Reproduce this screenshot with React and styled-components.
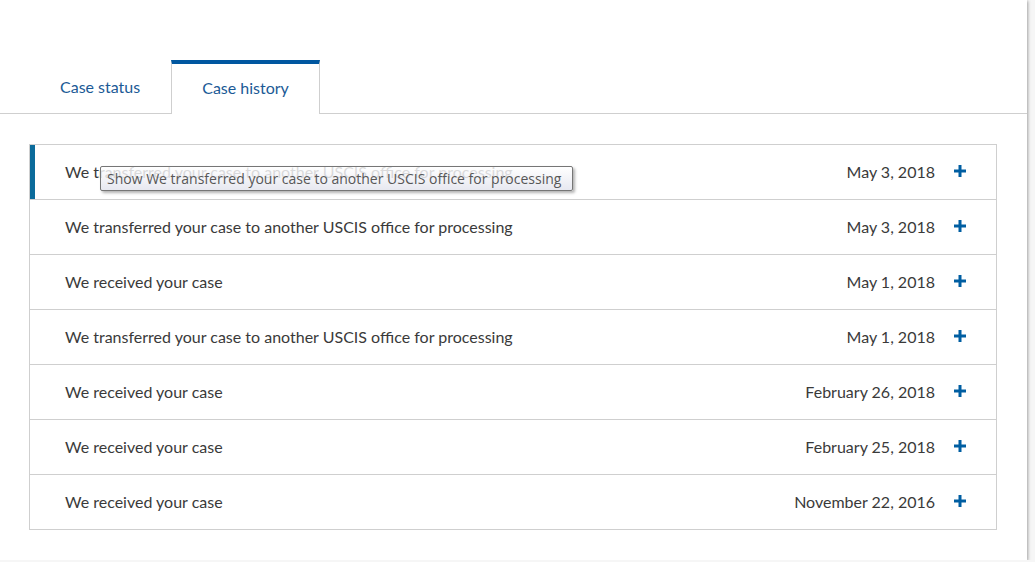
import React from "react";
import styled, { createGlobalStyle } from "styled-components";

const Global = createGlobalStyle`
  html, body { margin: 0; padding: 0; background: #f6f6f6; }
  body { font-family: "Lato", "Liberation Sans", sans-serif; }
`;

const history = [
  { text: "We transferred your case to another USCIS office for processing", date: "May 3, 2018", active: true },
  { text: "We transferred your case to another USCIS office for processing", date: "May 3, 2018" },
  { text: "We received your case", date: "May 1, 2018" },
  { text: "We transferred your case to another USCIS office for processing", date: "May 1, 2018" },
  { text: "We received your case", date: "February 26, 2018" },
  { text: "We received your case", date: "February 25, 2018" },
  { text: "We received your case", date: "November 22, 2016" },
];

export default function App() {
  return (
    <>
      <Global />
      <Card>
        <Tabs>
          <Tab>Case status</Tab>
          <Tab $active>Case history</Tab>
        </Tabs>
        <Body>
          <List>
            {history.map((h, i) => (
              <Row key={i} $active={h.active}>
                <Text>{h.text}</Text>
                <DateText>{h.date}</DateText>
                <Plus viewBox="0 0 12 12">
                  <rect x="4.5" y="0" width="3" height="12" />
                  <rect x="0" y="4.5" width="12" height="3" />
                </Plus>
              </Row>
            ))}
          </List>
          <Tooltip>Show We transferred your case to another USCIS office for processing</Tooltip>
        </Body>
      </Card>
    </>
  );
}

const Card = styled.div`
  position: relative;
  width: 1027px;
  height: 560px;
  background: #fff;
  box-shadow: 1px 1px 3px rgba(0, 0, 0, 0.35);
  padding-top: 60px;
  box-sizing: border-box;
`;

const Tabs = styled.div`
  display: flex;
  align-items: flex-end;
  padding-left: 29px;
  height: 53px;
  border-bottom: 1px solid #cfcfcf;
`;

const Tab = styled.div`
  box-sizing: border-box;
  height: ${(p) => (p.$active ? "54px" : "53px")};
  margin-bottom: ${(p) => (p.$active ? "-1px" : "0")};
  padding: 0 30px 4px;
  display: flex;
  align-items: center;
  font-size: 16px;
  color: #1b5a96;
  background: #fff;
  border-top: 4px solid ${(p) => (p.$active ? "#0057a0" : "transparent")};
  border-left: 1px solid ${(p) => (p.$active ? "#cfcfcf" : "transparent")};
  border-right: 1px solid ${(p) => (p.$active ? "#cfcfcf" : "transparent")};
`;

const Body = styled.div`
  position: relative;
  padding: 30px 30px 0 29px;
`;

const List = styled.div`
  border: 1px solid #cfcfcf;
  border-bottom: none;
`;

const Row = styled.div`
  display: flex;
  align-items: center;
  box-sizing: border-box;
  height: 55px;
  border-bottom: 1px solid #cfcfcf;
  padding: 0 30px 2px 35px;
  position: relative;
  &::before {
    content: "";
    display: ${(p) => (p.$active ? "block" : "none")};
    position: absolute;
    left: 0;
    top: 0;
    bottom: 0;
    width: 5px;
    background: #0b6b9b;
  }
`;

const Text = styled.span`
  flex: 1;
  font-size: 16px;
  color: #3a3a3a;
`;

const DateText = styled.span`
  font-size: 16px;
  color: #3a3a3a;
  margin-right: 19px;
`;

const Plus = styled.svg`
  width: 12px;
  height: 12px;
  fill: #005ea2;
`;

const Tooltip = styled.div`
  position: absolute;
  left: 100px;
  top: 52px;
  width: 473px;
  height: 25px;
  box-sizing: border-box;
  padding: 0 6px;
  display: flex;
  align-items: center;
  font-family: "Open Sans", "DejaVu Sans", sans-serif;
  font-size: 14px;
  color: #575757;
  background: linear-gradient(rgba(255, 255, 255, 0.82), rgba(228, 229, 238, 0.88));
  border: 1px solid #767676;
  border-radius: 2px;
  box-shadow: 2px 2px 3px rgba(0, 0, 0, 0.3);
  white-space: nowrap;
`;
